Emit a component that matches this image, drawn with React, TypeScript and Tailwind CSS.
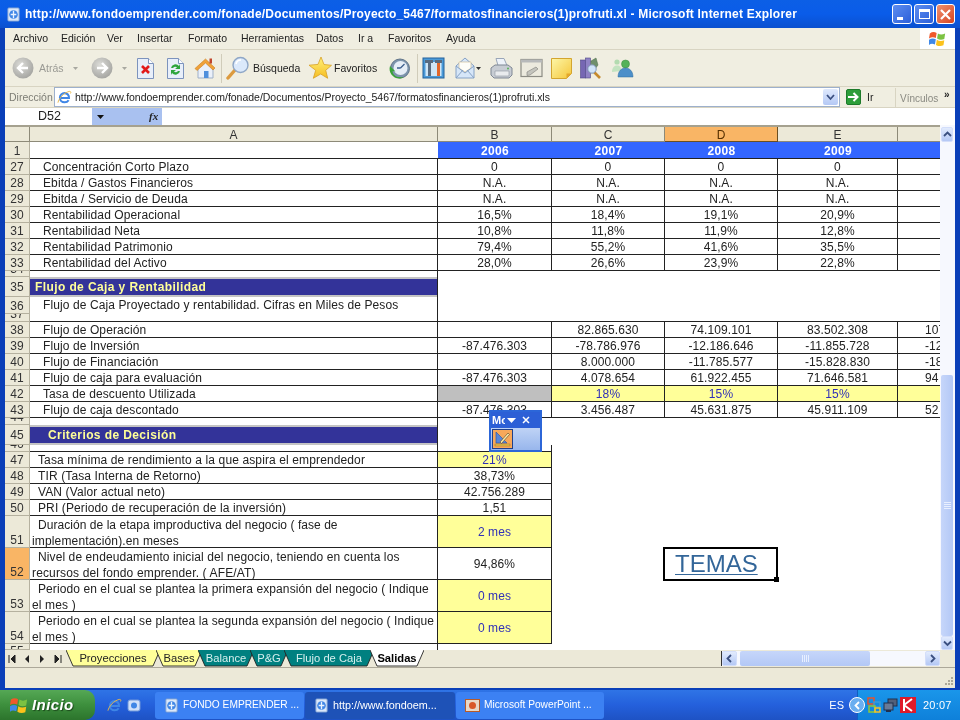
import React from "react";

type DataRow = { n: number; label: string; vals: string[]; kind?: string };

const COLS = ["w-[114px]", "w-[113px]", "w-[113px]", "w-[120px]", "w-[42px]"];

const top: DataRow[] = [
  { n: 27, label: "Concentración Corto Plazo", vals: ["0", "0", "0", "0", ""] },
  { n: 28, label: "Ebitda / Gastos Financieros", vals: ["N.A.", "N.A.", "N.A.", "N.A.", ""] },
  { n: 29, label: "Ebitda / Servicio de Deuda", vals: ["N.A.", "N.A.", "N.A.", "N.A.", ""] },
  { n: 30, label: "Rentabilidad Operacional", vals: ["16,5%", "18,4%", "19,1%", "20,9%", ""] },
  { n: 31, label: "Rentabilidad Neta", vals: ["10,8%", "11,8%", "11,9%", "12,8%", ""] },
  { n: 32, label: "Rentabilidad Patrimonio", vals: ["79,4%", "55,2%", "41,6%", "35,5%", ""] },
  { n: 33, label: "Rentabilidad del Activo", vals: ["28,0%", "26,6%", "23,9%", "22,8%", ""] },
];

const flow: DataRow[] = [
  { n: 38, label: "Flujo de Operación", vals: ["", "82.865.630", "74.109.101", "83.502.308", "107"] },
  { n: 39, label: "Flujo de Inversión", vals: ["-87.476.303", "-78.786.976", "-12.186.646", "-11.855.728", "-12"] },
  { n: 40, label: "Flujo de Financiación", vals: ["", "8.000.000", "-11.785.577", "-15.828.830", "-18"] },
  { n: 41, label: "Flujo de caja para evaluación", vals: ["-87.476.303", "4.078.654", "61.922.455", "71.646.581", "94"] },
  { n: 42, label: "Tasa de descuento Utilizada", vals: ["", "18%", "15%", "15%", ""], kind: "rate" },
  { n: 43, label: "Flujo de caja descontado", vals: ["-87.476.303", "3.456.487", "45.631.875", "45.911.109", "52"] },
];

const tabs = [
  { t: "Proyecciones", w: 94, fill: "#ffff99", text: "text-[#222]" },
  { t: "Bases", w: 46, fill: "#ffff99", text: "text-[#222]" },
  { t: "Balance", w: 56, fill: "#008080", text: "text-[#d5efee]" },
  { t: "P&G", w: 38, fill: "#008080", text: "text-[#d5efee]" },
  { t: "Flujo de Caja", w: 90, fill: "#008080", text: "text-[#d5efee]" },
  { t: "Salidas", w: 54, fill: "#ffffff", text: "text-black font-bold" },
];

function RowHead({ n, h, hot, align }: { n: number; h: string; hot?: boolean; align?: string }) {
  return (
    <div
      className={`${h} w-[25px] shrink-0 overflow-hidden flex justify-center text-[12px] leading-[14px] text-[#333] border-r border-b border-[#b5b19f] ${
        hot ? "bg-[#f9b565]" : "bg-[#ece9d8]"
      } ${align ?? "items-center pt-px"}`}
    >
      {n}
    </div>
  );
}

function SheetRow({ r }: { r: DataRow }) {
  return (
    <div className="flex h-[16px]">
      <RowHead n={r.n} h="h-[16px]" />
      <div className="w-[408px] h-[16px] border-b border-r border-[#222] pl-[13px] leading-[17px] tracking-[0.1px] text-[#222] whitespace-nowrap">
        {r.label}
      </div>
      {r.vals.map((v, i) => {
        const rate = r.kind === "rate";
        const gray = rate && i === 0;
        const yellow = rate && i > 0;
        return (
          <div
            key={i}
            className={`${COLS[i]} h-[16px] border-b border-[#222] leading-[17px] tracking-[0.1px] whitespace-nowrap overflow-hidden ${
              i < 4 ? "border-r" : ""
            } ${i === 4 ? "pl-[27px] text-left" : "text-center"} ${
              gray ? "bg-[#bfbfbf]" : yellow ? "bg-[#ffff99] text-[#3030b8]" : "text-[#222]"
            }`}
          >
            {v}
          </div>
        );
      })}
    </div>
  );
}

function SectionRow({ n, h, text, pad }: { n: number; h: string; text: string; pad: string }) {
  return (
    <div className={`flex ${h}`}>
      <RowHead n={n} h={h} />
      <div className={`w-[408px] ${h} border-r border-[#222] flex flex-col`}>
        <div className="h-[3px] bg-[#c4c4c4]" />
        <div className={`flex-1 bg-[#333399] text-[#ffff99] font-bold tracking-[0.4px] leading-[16px] whitespace-nowrap ${pad}`}>
          {text}
        </div>
        <div className="h-[2px] bg-[#c4c4c4]" />
      </div>
    </div>
  );
}

function ThinRow({ n, h, align }: { n: number; h: string; align?: string }) {
  return (
    <div className={`flex ${h}`}>
      <RowHead n={n} h={h} align={align ?? "items-end"} />
      <div className={`w-[408px] ${h} border-r border-[#222]`} />
    </div>
  );
}

function TwoLineRow({ n, l1, l2, val, yellow, hot, track }: { n: number; l1: string; l2: string; val: string; yellow?: boolean; hot?: boolean; track: string }) {
  return (
    <div className="flex h-[32px]">
      <RowHead n={n} h="h-[32px]" hot={hot} align="items-end" />
      <div className="w-[408px] h-[32px] border-r border-b border-[#222] pt-px pl-[2px] text-[#222] leading-[16px] whitespace-nowrap">
        <div className={`pl-[6px] ${track}`}>{l1}</div>
        <div className="tracking-[0.15px]">{l2}</div>
      </div>
      <div
        className={`w-[114px] h-[32px] border-r border-b border-[#222] flex items-center justify-center tracking-[0.1px] ${
          yellow ? "bg-[#ffff99] text-[#3030b8]" : "text-[#222]"
        }`}
      >
        {val}
      </div>
    </div>
  );
}

function OneLineRow({ n, label, val, yellow }: { n: number; label: string; val: string; yellow?: boolean }) {
  return (
    <div className="flex h-[16px]">
      <RowHead n={n} h="h-[16px]" />
      <div className="w-[408px] h-[16px] border-r border-b border-[#222] pl-[8px] leading-[17px] tracking-[0.12px] text-[#222] whitespace-nowrap">
        {label}
      </div>
      <div
        className={`w-[114px] h-[16px] border-r border-b border-[#222] text-center leading-[17px] tracking-[0.1px] ${
          yellow ? "bg-[#ffff99] text-[#3030b8]" : "text-[#222]"
        }`}
      >
        {val}
      </div>
    </div>
  );
}

function Flag({ s = 16 }: { s?: number }) {
  return (
    <svg width={s} height={s} viewBox="0 0 20 20" className="shrink-0">
      <path d="M1 4 Q5 1 9 3.5 L8 9.5 Q4 7.5 0 10 Z" fill="#f0592a" />
      <path d="M10.5 4 Q14 6.5 19 4 L18 10.5 Q13.5 12.5 9.5 10 Z" fill="#7cc242" />
      <path d="M0 11.5 Q4 9 8 11 L7 17 Q3 15 -0 17.5 Z" fill="#3f88e8" />
      <path d="M9.2 11.5 Q13 14 18 12 L17 18 Q12.5 20 8.2 17.5 Z" fill="#fcc21b" />
    </svg>
  );
}

function IE({ s = 16 }: { s?: number }) {
  return (
    <svg width={s} height={s} viewBox="0 0 16 16" className="shrink-0">
      <path d="M3.2 8.6h9.6c.2-3-1.9-5.3-4.7-5.3-2.8 0-5 2.2-5 4.9 0 2.8 2.1 4.9 5 4.9 1.9 0 3.4-.8 4.3-2.2" fill="none" stroke="#3f86e6" strokeWidth="2.2" />
      <path d="M1 13.5C2 9 7 3 13 1.5c1.6-.3 2.2.8 1.4 2.2" fill="none" stroke="#e9b84a" strokeWidth="1" />
    </svg>
  );
}

function PageIE({ s = 16 }: { s?: number }) {
  return (
    <svg width={s} height={s} viewBox="0 0 16 16" className="shrink-0">
      <rect x="2" y="1" width="12" height="14" rx="1" fill="#dbe8fa" stroke="#7fa1d2" />
      <circle cx="8" cy="8" r="4.6" fill="#3f86e6" />
      <path d="M5 8h6M8 4v8" stroke="#e8f2ff" strokeWidth="1.4" />
    </svg>
  );
}

function NavCircle({ dir }: { dir: "l" | "r" }) {
  return (
    <svg width="22" height="22" viewBox="0 0 22 22" className="shrink-0">
      <defs>
        <radialGradient id={`nav${dir}`} cx="0.4" cy="0.35" r="0.8">
          <stop offset="0" stopColor="#dcdcd8" />
          <stop offset="1" stopColor="#9b9b97" />
        </radialGradient>
      </defs>
      <circle cx="11" cy="11" r="10.5" fill={`url(#nav${dir})`} />
      {dir === "l" ? (
        <path d="M16 11H7M11 6l-5 5 5 5" fill="none" stroke="#fff" strokeWidth="2.4" />
      ) : (
        <path d="M6 11h9M11 6l5 5-5 5" fill="none" stroke="#fff" strokeWidth="2.4" />
      )}
    </svg>
  );
}

function Caret({ c = "#a8a8a0" }: { c?: string }) {
  return (
    <svg width="5" height="3" viewBox="0 0 5 3" className="shrink-0">
      <path d="M0 0h5L2.5 3z" fill={c} />
    </svg>
  );
}

function DocBase({ children }: { children: React.ReactNode }) {
  return (
    <svg width="19" height="23" viewBox="0 0 19 23" className="shrink-0">
      <path d="M1.5 1.5h11l5 5v15h-16z" fill="#e8effa" stroke="#7c93bd" />
      <path d="M12.5 1.5v5h5" fill="#fff" stroke="#7c93bd" />
      {children}
    </svg>
  );
}

const StopIcon = () => (
  <DocBase>
    <path d="M6 9l7 7M13 9l-7 7" stroke="#e21b1b" strokeWidth="2.6" />
  </DocBase>
);

const RefreshIcon = () => (
  <DocBase>
    <path d="M5 11a4.5 4.5 0 0 1 8-2l1-2v5h-5l2-1.5a2.6 2.6 0 0 0-4 .5z" fill="#2ea53c" />
    <path d="M14 14a4.5 4.5 0 0 1-8 2l-1 2v-5h5l-2 1.5a2.6 2.6 0 0 0 4-.5z" fill="#2ea53c" />
  </DocBase>
);

const HomeIcon = () => (
  <svg width="22" height="23" viewBox="0 0 22 23" className="shrink-0">
    <path d="M4 11l8-7 7 7v10H4z" fill="#eaf0fa" stroke="#9fb0c8" />
    <path d="M1 11.5L11.5 2l9.5 9-2 2-7.5-7-8.5 7.5z" fill="#f0a23a" stroke="#c97c1c" strokeWidth=".6" />
    <rect x="15.5" y="1.5" width="2.5" height="5" fill="#c0452c" />
    <rect x="10" y="14" width="4.5" height="7" fill="#4f8fdc" />
  </svg>
);

const SearchIcon = () => (
  <svg width="24" height="24" viewBox="0 0 24 24" className="shrink-0">
    <path d="M2 22l7-8" stroke="#dc9a3e" strokeWidth="3.4" strokeLinecap="round" />
    <circle cx="14.5" cy="9" r="7.5" fill="#dbe9fb" stroke="#8ea6c6" strokeWidth="1.4" />
    <path d="M10 8a5 5 0 0 1 5-4" fill="none" stroke="#fff" strokeWidth="1.6" />
  </svg>
);

const StarIcon = () => (
  <svg width="24" height="24" viewBox="0 0 24 24" className="shrink-0">
    <defs>
      <linearGradient id="star" x1="0" y1="0" x2="0" y2="1">
        <stop offset="0" stopColor="#fff27a" />
        <stop offset="1" stopColor="#f5bd22" />
      </linearGradient>
    </defs>
    <path d="M13 1l3 7.5 7.5.8-5.8 5 2 8-7-4.3-7.4 4.3 2.4-8L1 9.2l9-.8z" fill="url(#star)" stroke="#d8a126" strokeWidth=".8" />
  </svg>
);

const HistoryIcon = () => (
  <svg width="23" height="23" viewBox="0 0 23 23" className="shrink-0">
    <circle cx="12" cy="11.5" r="9.5" fill="#7d95ad" stroke="#62758a" />
    <circle cx="12.5" cy="11" r="7" fill="#e6eef7" />
    <path d="M12.5 11l4-4M12.5 11H9" stroke="#3d5f8d" strokeWidth="1.3" />
    <path d="M2 9c-2 6 3 13 10 12.5 2 0 3.5-1 3.5-1L11 20c-3 0-6-2-6.5-6l3 .5z" fill="#3aa33a" />
  </svg>
);

const ToolsIcon = () => (
  <svg width="23" height="22" viewBox="0 0 23 22" className="shrink-0">
    <rect x="1" y="1" width="21" height="20" fill="#4a9ad8" stroke="#23619b" />
    <rect x="3.5" y="5" width="16" height="14" fill="#cfe6f7" />
    <path d="M3 3h8v3H9v13H6V6H3z" fill="#586b80" />
    <rect x="13" y="3" width="7" height="3" fill="#586b80" />
    <rect x="15" y="6" width="3" height="13" fill="#e2672a" />
  </svg>
);

const MailIcon = () => (
  <svg width="20" height="22" viewBox="0 0 20 22" className="shrink-0">
    <path d="M1 9l9-8 9 8v12H1z" fill="#d6e6f8" stroke="#86a2c6" />
    <path d="M4 11V5h12v6l-6 4z" fill="#fdfdf8" stroke="#c9b58a" strokeWidth=".6" />
    <path d="M1 21l7-8M19 21l-7-8" stroke="#86a2c6" />
    <path d="M1 9l9 7 9-7" fill="none" stroke="#86a2c6" />
  </svg>
);

const PrintIcon = () => (
  <svg width="23" height="23" viewBox="0 0 23 23" className="shrink-0">
    <path d="M6 1.5h8l3 7H8z" fill="#eef3fa" stroke="#9aa6b8" />
    <path d="M1 11l4-3h13l4 3v7l-3 3H4l-3-3z" fill="#c7ccd3" stroke="#7f8794" />
    <path d="M5 14h14v5H5z" fill="#e9ebee" stroke="#8e95a0" strokeWidth=".6" />
    <circle cx="18" cy="11.5" r="1" fill="#58b158" />
  </svg>
);

const EditIcon = () => (
  <svg width="23" height="20" viewBox="0 0 23 20" className="shrink-0">
    <rect x="1" y="1.5" width="21" height="17" fill="#eceade" stroke="#8c8c84" strokeWidth="1.2" />
    <rect x="1" y="1.5" width="21" height="3" fill="#b7b9ba" />
    <path d="M7 14l9-5 2 2-8 6-3 .5z" fill="#c4c4bd" stroke="#7e7e78" strokeWidth=".6" />
  </svg>
);

const NoteIcon = () => (
  <svg width="21" height="21" viewBox="0 0 21 21" className="shrink-0">
    <defs>
      <linearGradient id="note" x1="0" y1="0" x2="1" y2="1">
        <stop offset="0" stopColor="#fdf7a8" />
        <stop offset="1" stopColor="#f5c63a" />
      </linearGradient>
    </defs>
    <path d="M.5.5h20v15l-5 5h-15z" fill="url(#note)" stroke="#d3a52f" />
    <path d="M15.5 20.5v-5h5z" fill="#e4a72a" />
  </svg>
);

const ResearchIcon = () => (
  <svg width="22" height="22" viewBox="0 0 22 22" className="shrink-0">
    <rect x="0.5" y="3" width="5" height="18" fill="#7667b3" stroke="#4f4788" strokeWidth=".6" />
    <rect x="5.5" y="1" width="5" height="20" fill="#8f82c5" stroke="#4f4788" strokeWidth=".6" />
    <path d="M11 4l5-3 2 7-6 8z" fill="#6f8f6c" stroke="#4c6b4a" strokeWidth=".5" />
    <path d="M14 15l6 6" stroke="#c58a2e" strokeWidth="2.6" />
    <circle cx="12" cy="12" r="4.2" fill="#cfe3fa" stroke="#7f95b3" />
  </svg>
);

const MessengerIcon = () => (
  <svg width="24" height="22" viewBox="0 0 24 22" className="shrink-0">
    <circle cx="7" cy="5" r="2.6" fill="#b3dbb0" />
    <path d="M2 15c0-4 2-6.500 5-6.500S11 10 11 14z" fill="#c3e3c0" />
    <circle cx="15.500" cy="7" r="4" fill="#55b25a" stroke="#3a8a40" strokeWidth=".5" />
    <path d="M8 20c0-6 3.500-9 7.500-9s7.500 3 7.500 9z" fill="#4c8fc9" stroke="#2f6c9f" strokeWidth=".5" />
  </svg>
);

function ScrollBtn({ d, cls }: { d: string; cls: string }) {
  return (
    <div className={`${cls} shrink-0 rounded-[2px] bg-linear-to-b from-[#e2ebfd] to-[#b4c8f5] border border-[#d3defa] flex items-center justify-center`}>
      <svg width="9" height="9" viewBox="0 0 9 9">
        <path d={d} fill="none" stroke="#3a4f80" strokeWidth="1.8" />
      </svg>
    </div>
  );
}

function Grip({ vertical }: { vertical?: boolean }) {
  return (
    <div className={`flex ${vertical ? "flex-col w-[7px]" : "flex-row h-[7px]"} gap-px`}>
      <div className={vertical ? "h-px bg-[#e8efff]" : "w-px bg-[#e8efff]"} />
      <div className={vertical ? "h-px bg-[#e8efff]" : "w-px bg-[#e8efff]"} />
      <div className={vertical ? "h-px bg-[#e8efff]" : "w-px bg-[#e8efff]"} />
      <div className={vertical ? "h-px bg-[#e8efff]" : "w-px bg-[#e8efff]"} />
    </div>
  );
}

function Tab({ t, w, fill, text }: { t: string; w: number; fill: string; text: string }) {
  return (
    <div className={`relative h-[17px] shrink-0 -ml-[4px] first:ml-0 flex items-center justify-center text-[11.2px] whitespace-nowrap ${text}`} style={{ width: w }}>
      <svg className="absolute inset-0" width={w} height={17} viewBox={`0 0 ${w} 17`}>
        <path d={`M0 0L7 16H${w - 7}L${w} 0Z`} fill={fill} />
        <path d={`M0 0L7 16H${w - 7}L${w} 0`} fill="none" stroke="#222" strokeWidth=".9" />
      </svg>
      <span className="relative">{t}</span>
    </div>
  );
}

function TaskBtn({ icon, label, active, cls, tc }: { icon: React.ReactNode; label: string; active?: boolean; cls: string; tc: string }) {
  return (
    <div
      className={`${cls} h-[27px] shrink-0 rounded-[3px] flex items-center gap-[4px] pl-[9px] text-white whitespace-nowrap ${
        active ? "bg-[#1e52b7]" : "bg-[#3c81f3]"
      }`}
    >
      {icon}
      <span className={tc}>{label}</span>
    </div>
  );
}

export default function App() {
  return (
    <div className="w-[960px] h-[720px] overflow-hidden flex flex-col bg-[#0a3fb8] font-['Liberation_Sans',sans-serif] text-[12px] blur-[0.3px]">
      {/* title bar */}
      <div className="h-[28px] shrink-0 flex items-center pl-[6px] pr-[5px] bg-linear-to-b from-[#0c5fe6] via-[#0a5ce9] to-[#0a50cf]">
        <PageIE s={15} />
        <div className="ml-[4px] text-[12px] font-bold text-white tracking-[0.2px] whitespace-nowrap">
          http://www.fondoemprender.com/fonade/Documentos/Proyecto_5467/formatosfinancieros(1)profruti.xl - Microsoft Internet Explorer
        </div>
        <div className="ml-auto flex gap-[2px]">
          <div className="w-[20px] h-[20px] rounded-[3px] border border-white bg-linear-to-br from-[#5d8df0] to-[#2c5fd9] flex items-end pl-[4px] pb-[3px]">
            <div className="w-[6px] h-[3px] bg-white" />
          </div>
          <div className="w-[20px] h-[20px] rounded-[3px] border border-white bg-linear-to-br from-[#5d8df0] to-[#2c5fd9] flex items-center justify-center">
            <div className="w-[11px] h-[10px] border border-white border-t-[3px]" />
          </div>
          <div className="w-[19px] h-[20px] rounded-[3px] border border-white bg-linear-to-br from-[#f0906f] to-[#d4411b] flex items-center justify-center">
            <svg width="11" height="11" viewBox="0 0 11 11">
              <path d="M1 1l9 9M10 1l-9 9" stroke="#fff" strokeWidth="2.2" />
            </svg>
          </div>
        </div>
      </div>

      {/* window body */}
      <div className="h-[660px] shrink-0 mx-[5px] flex flex-col bg-[#ece9d8]">
        {/* menu */}
        <div className="h-[22px] shrink-0 flex items-center bg-[#f0eee1] border-b border-[#d8d4c2] pl-[8px] text-[10.5px] text-[#222]">
          <span className="w-[48px] pt-px">Archivo</span>
          <span className="w-[46px] pt-px">Edición</span>
          <span className="w-[30px] pt-px">Ver</span>
          <span className="w-[51px] pt-px">Insertar</span>
          <span className="w-[53px] pt-px">Formato</span>
          <span className="w-[75px] pt-px">Herramientas</span>
          <span className="w-[42px] pt-px">Datos</span>
          <span className="w-[30px] pt-px">Ir a</span>
          <span className="w-[58px] pt-px">Favoritos</span>
          <span className="w-[40px] pt-px">Ayuda</span>
          <div className="ml-auto w-[35px] h-full bg-white flex items-center justify-center">
            <Flag s={17} />
          </div>
        </div>

        {/* toolbar */}
        <div className="h-[37px] shrink-0 flex items-center bg-[#f0eee1] border-b border-[#d8d4c2] text-[10.5px] text-[#222] whitespace-nowrap">
          <div className="ml-[7px]"><NavCircle dir="l" /></div>
          <span className="ml-[5px] w-[25px] pt-px text-[#9a9a94]">Atrás</span>
          <div className="ml-[9px]"><Caret /></div>
          <div className="ml-[13px]"><NavCircle dir="r" /></div>
          <div className="ml-[9px]"><Caret /></div>
          <div className="ml-[9px]"><StopIcon /></div>
          <div className="ml-[11px]"><RefreshIcon /></div>
          <div className="ml-[9px]"><HomeIcon /></div>
          <div className="ml-[5px] w-px h-[29px] bg-[#d0ccba]" />
          <div className="ml-[4px]"><SearchIcon /></div>
          <span className="ml-[3px] w-[45px] pt-px">Búsqueda</span>
          <div className="ml-[10px]"><StarIcon /></div>
          <span className="ml-[2px] w-[43px] pt-px">Favoritos</span>
          <div className="ml-[11px]"><HistoryIcon /></div>
          <div className="ml-[6px] w-px h-[29px] bg-[#d0ccba]" />
          <div className="ml-[4px]"><ToolsIcon /></div>
          <div className="ml-[10px]"><MailIcon /></div>
          <div className="ml-px"><Caret c="#333" /></div>
          <div className="ml-[9px]"><PrintIcon /></div>
          <div className="ml-[7px]"><EditIcon /></div>
          <div className="ml-[8px]"><NoteIcon /></div>
          <div className="ml-[8px]"><ResearchIcon /></div>
          <div className="ml-[8px]"><MessengerIcon /></div>
        </div>

        {/* address bar */}
        <div className="h-[21px] shrink-0 flex items-center bg-[#f0eee1] border-b border-[#d8d4c2] text-[10.5px] whitespace-nowrap">
          <span className="ml-[4px] w-[45px] pt-[2px] text-[#7d7d75]">Dirección</span>
          <div className="w-[786px] h-[20px] bg-white border border-[#9db0cc] flex items-center pl-[2px] text-[#222]">
            <IE s={15} />
            <span className="ml-[3px] pt-[2px] tracking-[-0.02px]">http://www.fondoemprender.com/fonade/Documentos/Proyecto_5467/formatosfinancieros(1)profruti.xls</span>
            <div className="ml-auto mr-px w-[15px] h-[16px] bg-linear-to-b from-[#dfe9fd] to-[#b5c9f5] rounded-[2px] flex items-center justify-center">
              <svg width="9" height="7" viewBox="0 0 9 7"><path d="M1 1l3.500 4L8 1" fill="none" stroke="#3a4f80" strokeWidth="1.8" /></svg>
            </div>
          </div>
          <div className="ml-[6px] w-[15px] h-[16px] bg-[#2d9e3a] border border-[#1d7a2a] rounded-[2px] flex items-center justify-center">
            <svg width="11" height="10" viewBox="0 0 11 10"><path d="M0 5h9M5.500 1l4 4-4 4" fill="none" stroke="#fff" strokeWidth="2" /></svg>
          </div>
          <span className="ml-[6px] w-[28px] pt-[2px] text-[#222]">Ir</span>
          <div className="w-px h-[19px] bg-[#d8d4c2]" />
          <span className="ml-[4px] w-[44px] pt-[2px] text-[10px] text-[#8a8a82]">Vínculos</span>
          <span className="text-[10px] font-bold text-[#222] -mt-[6px]">»</span>
        </div>

        {/* formula bar */}
        <div className="h-[17px] shrink-0 flex bg-white">
          <div className="w-[87px] text-[12.5px] leading-[17px] pl-[33px] text-[#222]">D52</div>
          <div className="w-[70px] bg-[#a9c1f0] flex items-center">
            <svg className="ml-[5px]" width="7" height="4" viewBox="0 0 7 4"><path d="M0 0h7L3.500 4z" fill="#111" /></svg>
            <span className="ml-[45px] text-[11px] italic font-['Liberation_Serif',serif] font-bold text-[#222]">fx</span>
          </div>
        </div>

        {/* sheet and scrollbar */}
        <div className="h-[525px] shrink-0 flex">
          <div className="relative w-[935px] bg-white overflow-hidden">
            {/* column headers */}
            <div className="flex h-[17px] text-[#333] text-center leading-[16px] border-t-2 border-[#a5a18f]">
              <div className="w-[25px] bg-[#ece9d8] border-r border-b border-[#8d8a78]" />
              <div className="w-[408px] bg-[#ece9d8] border-r border-b border-[#8d8a78]">A</div>
              <div className="w-[114px] bg-[#ece9d8] border-r border-b border-[#8d8a78]">B</div>
              <div className="w-[113px] bg-[#ece9d8] border-r border-b border-[#8d8a78]">C</div>
              <div className="w-[113px] bg-[#f9b565] border-r border-b border-[#6a4f22] text-[#552f00]">D</div>
              <div className="w-[120px] bg-[#ece9d8] border-r border-b border-[#8d8a78]">E</div>
              <div className="w-[42px] bg-[#ece9d8] border-b border-[#8d8a78]" />
            </div>

            {/* row 1 */}
            <div className="flex h-[17px]">
              <RowHead n={1} h="h-[17px]" />
              <div className="w-[408px] h-[17px] border-b border-[#222]" />
              <div className="flex-1 h-[17px] flex bg-[#3366ff] border-b border-[#222] text-white font-bold text-center leading-[18px] tracking-[0.3px]">
                <div className="w-[114px]">2006</div>
                <div className="w-[113px]">2007</div>
                <div className="w-[113px]">2008</div>
                <div className="w-[120px]">2009</div>
              </div>
            </div>

            {top.map((r) => <SheetRow key={r.n} r={r} />)}
            <ThinRow n={34} h="h-[6px]" />
            <SectionRow n={35} h="h-[20px]" text="Flujo de Caja y Rentabilidad" pad="pl-[5px]" />
            <div className="flex h-[17px]">
              <RowHead n={36} h="h-[17px]" />
              <div className="w-[408px] h-[17px] border-r border-[#222] pl-[13px] leading-[16px] tracking-[0.1px] text-[#222] whitespace-nowrap">
                Flujo de Caja Proyectado y rentabilidad. Cifras en Miles de Pesos
              </div>
            </div>
            <div className="flex h-[8px]">
              <RowHead n={37} h="h-[8px]" align="items-end" />
              <div className="w-[408px] h-[8px] border-r border-b border-[#222]" />
              <div className="w-[502px] h-[8px] border-b border-[#222]" />
            </div>
            {flow.map((r) => <SheetRow key={r.n} r={r} />)}
            <ThinRow n={44} h="h-[7px]" />
            <SectionRow n={45} h="h-[20px]" text="Criterios de Decisión" pad="pl-[18px]" />
            <div className="flex h-[7px]">
              <RowHead n={46} h="h-[7px]" align="items-end" />
              <div className="w-[408px] h-[7px] border-r border-b border-[#222]" />
              <div className="w-[114px] h-[7px] border-r border-b border-[#222]" />
            </div>
            <OneLineRow n={47} label="Tasa mínima de rendimiento a la que aspira el emprendedor" val="21%" yellow />
            <OneLineRow n={48} label="TIR (Tasa Interna de Retorno)" val="38,73%" />
            <OneLineRow n={49} label="VAN (Valor actual neto)" val="42.756.289" />
            <OneLineRow n={50} label="PRI (Periodo de recuperación de la inversión)" val="1,51" />
            <TwoLineRow n={51} track="tracking-[0.05px]" l1="Duración de la etapa improductiva del negocio ( fase de" l2="implementación).en meses" val="2 mes" yellow />
            <TwoLineRow n={52} track="tracking-[0.1px]" l1="Nivel de endeudamiento inicial del negocio, teniendo en cuenta los" l2="recursos del fondo emprender. ( AFE/AT)" val="94,86%" hot />
            <TwoLineRow n={53} track="tracking-[0.09px]" l1="Periodo en el cual se plantea la primera expansión del negocio ( Indique" l2="el mes )" val="0 mes" yellow />
            <TwoLineRow n={54} track="tracking-[0.09px]" l1="Periodo en el cual se plantea la segunda expansión del negocio ( Indique" l2="el mes )" val="0 mes" yellow />
            <ThinRow n={55} h="h-[6px]" align="items-start" />

            {/* floating toolbar */}
            <div className="absolute left-[484px] top-[285px] w-[53px] h-[42px] border-2 border-[#2c66d8] bg-linear-to-b from-[#dce8fb] to-[#98b6ec] flex flex-col">
              <div className="h-[16px] bg-[#2c5fd6] flex items-center pl-px text-white font-bold text-[11px] overflow-hidden">
                <span className="w-[13px] overflow-hidden">Mo</span>
                <svg className="ml-[2px]" width="9" height="5" viewBox="0 0 9 5"><path d="M0 0h9L4.500 5z" fill="#fff" /></svg>
                <svg className="ml-[6px]" width="8" height="8" viewBox="0 0 8 8"><path d="M1 1l6 6M7 1L1 7" stroke="#fff" strokeWidth="1.500" /></svg>
              </div>
              <div className="mt-[1px] ml-px w-[21px] h-[20px] bg-[#f8a85a] border border-[#20408a] flex items-center justify-center">
                <svg width="17" height="16" viewBox="0 0 17 16">
                  <path d="M2 1v11h11z" fill="#5a86d6" stroke="#2f5aa8" strokeWidth=".7" />
                  <path d="M6 11l8-9 1.500 1.500-8 9z" fill="#f4e6a8" stroke="#604020" strokeWidth=".6" />
                  <rect x="1" y="13" width="15" height="2" fill="#e8c04a" stroke="#80601c" strokeWidth=".4" />
                </svg>
              </div>
            </div>

            {/* TEMAS box */}
            <div className="absolute left-[658px] top-[422px] w-[115px] h-[34px] border-2 border-black bg-white pl-[10px] text-[24px] leading-[29px] text-[#336699] underline decoration-1 underline-offset-2">
              TEMAS
              <div className="absolute -right-[3px] -bottom-[3px] w-[5px] h-[5px] bg-black" />
            </div>
          </div>

          {/* vertical scrollbar */}
          <div className="w-[15px] flex flex-col pl-px pr-[2px] bg-[#f6f8fe]">
            <ScrollBtn d="M1 6l3.500-3.500L8 6" cls="mt-[2px] h-[15px]" />
            <div className="h-[233px] shrink-0" />
            <div className="flex-1 rounded-[2px] bg-linear-to-r from-[#c6d6fa] to-[#b3c8f6] flex items-center justify-center">
              <Grip vertical />
            </div>
            <ScrollBtn d="M1 2.500L4.500 6 8 2.500" cls="h-[14px]" />
          </div>
        </div>

        {/* sheet tabs */}
        <div className="h-[18px] shrink-0 flex items-center bg-[#ece9d8] border-b border-[#aca899]">
          <div className="w-[61px] flex items-center pl-[3px] text-[#222] shrink-0">
            <svg width="8" height="8" viewBox="0 0 8 8"><path d="M1 0v8M7 0L3 4l4 4z" stroke="#222" fill="#222" /></svg>
            <svg className="ml-[8px]" width="6" height="8" viewBox="0 0 6 8"><path d="M5 0L1 4l4 4z" fill="#222" /></svg>
            <svg className="ml-[9px]" width="6" height="8" viewBox="0 0 6 8"><path d="M1 0l4 4-4 4z" fill="#222" /></svg>
            <svg className="ml-[9px]" width="8" height="8" viewBox="0 0 8 8"><path d="M7 0v8M1 0l4 4-4 4z" stroke="#222" fill="#222" /></svg>
          </div>
          <div className="flex">
            {tabs.map((t) => <Tab key={t.t} {...t} />)}
          </div>
          <div className="flex-1" />
          <div className="w-px h-[15px] bg-[#333]" />
          <div className="w-[218px] h-[15px] flex bg-[#f6f8fe] shrink-0">
            <ScrollBtn d="M6 1L2.500 4.500 6 8" cls="w-[15px]" />
            <div className="ml-[3px] w-[130px] rounded-[2px] bg-linear-to-b from-[#c6d6fa] to-[#b3c8f6] flex items-center justify-center">
              <Grip />
            </div>
            <div className="flex-1" />
            <ScrollBtn d="M3 1l3.500 3.500L3 8" cls="w-[15px]" />
          </div>
          <div className="w-[15px]" />
        </div>

        {/* status bar */}
        <div className="flex-1 bg-[#ece9d8] flex justify-end items-end pr-[1px] pb-[1px]">
          <svg width="12" height="12" viewBox="0 0 12 12">
            <g fill="#aca899">
              <rect x="9" y="2" width="2" height="2" /><rect x="6" y="5" width="2" height="2" /><rect x="9" y="5" width="2" height="2" />
              <rect x="3" y="8" width="2" height="2" /><rect x="6" y="8" width="2" height="2" /><rect x="9" y="8" width="2" height="2" />
            </g>
          </svg>
        </div>
      </div>
      <div className="h-[2px] shrink-0 bg-[#0a3fb8]" />

      {/* taskbar */}
      <div className="h-[30px] shrink-0 flex items-center bg-linear-to-b from-[#2f74e6] via-[#2460dc] to-[#1e52c4] text-white">
        <div className="w-[95px] h-full shrink-0 rounded-r-[10px] bg-linear-to-b from-[#55a855] via-[#3d8f3d] to-[#2c742c] flex items-center pl-[10px] gap-[4px]">
          <Flag s={18} />
          <span className="text-[15px] font-bold italic tracking-[0.4px] [text-shadow:1px_1px_1px_#1c4a1c]">Inicio</span>
        </div>
        <div className="ml-[12px] w-[48px] flex gap-[5px] shrink-0">
          <IE s={15} />
          <svg width="15" height="15" viewBox="0 0 15 15"><rect x="1" y="2" width="12" height="11" rx="2" fill="#cfe0fa" stroke="#6f96d8" /><circle cx="7" cy="7.500" r="3" fill="#3f86e6" /></svg>
        </div>
        <TaskBtn cls="w-[149px]" tc="text-[10.2px]" icon={<PageIE s={15} />} label="FONDO EMPRENDER ..." />
        <TaskBtn cls="ml-px w-[150px]" tc="text-[10.8px]" icon={<PageIE s={15} />} label="http://www.fondoem..." active />
        <TaskBtn cls="ml-px w-[148px]" tc="text-[10.2px]" icon={
          <svg width="15" height="15" viewBox="0 0 15 15"><rect x=".5" y="1.500" width="14" height="12" fill="#e8d8c8" stroke="#b85a28" /><circle cx="7.500" cy="7.500" r="3.500" fill="#d8582a" /></svg>
        } label="Microsoft PowerPoint ..." />
        <div className="flex-1" />
        <span className="text-[11px] mr-[13px]">ES</span>
        <div className="w-[103px] h-full shrink-0 bg-linear-to-b from-[#1a96ea] to-[#0e80da] flex items-center border-l border-[#0f5fc0] relative">
          <div className="absolute -left-[9px] w-[16px] h-[16px] rounded-full bg-[#6aaef0] border border-white flex items-center justify-center">
            <svg width="7" height="9" viewBox="0 0 7 9"><path d="M5 1L1.500 4.500 5 8" fill="none" stroke="#fff" strokeWidth="1.800" /></svg>
          </div>
          <div className="ml-[9px]">
            <svg width="14" height="16" viewBox="0 0 14 16">
              <rect x="1" y="1" width="6" height="6" fill="none" stroke="#e8532a" strokeWidth="1.500" />
              <rect x="7" y="5" width="6" height="5" fill="none" stroke="#3a9ad8" strokeWidth="1.500" />
              <rect x="2" y="9" width="6" height="6" fill="none" stroke="#8fc83a" strokeWidth="1.500" />
              <rect x="8" y="11" width="5" height="4" fill="none" stroke="#f0c030" strokeWidth="1.500" />
            </svg>
          </div>
          <div className="ml-[2px]">
            <svg width="15" height="15" viewBox="0 0 15 15">
              <rect x="5" y="1" width="9" height="7" fill="#52607a" stroke="#20304e" />
              <rect x="1" y="5" width="9" height="7" fill="#6a7a96" stroke="#20304e" />
              <rect x="3" y="12" width="5" height="2" fill="#20304e" />
            </svg>
          </div>
          <div className="ml-[2px]">
            <svg width="16" height="16" viewBox="0 0 16 16">
              <rect width="16" height="16" fill="#e01a2a" />
              <path d="M4 2v12M4 8l8-6M4 8l8 6" fill="none" stroke="#fff" strokeWidth="2" />
            </svg>
          </div>
          <span className="ml-[7px] text-[11px] tracking-[0.2px]">20:07</span>
        </div>
      </div>
    </div>
  );
}
